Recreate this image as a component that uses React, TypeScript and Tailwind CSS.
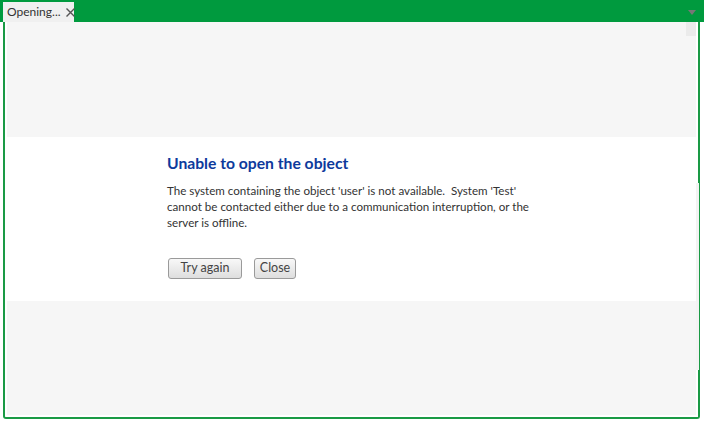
export default function App() {
  return (
    <div className="relative w-[704px] h-[423px] bg-white overflow-hidden" style={{ fontFamily: 'Lato, "Open Sans", sans-serif' }}>
      {/* top tab strip */}
      <div className="h-[22px] bg-[#009a3e] flex items-end pl-[3px] relative">
        <div className="h-[20px] w-[71px] bg-[#f0f0f0] flex items-center pl-[4px] gap-[5px] text-[12px] text-[#333]">
          <span className="whitespace-nowrap">Opening...</span>
          <svg width="9" height="9" viewBox="0 0 9 9" className="shrink-0 mt-[1px]">
            <path d="M0.5 0.5 L8.5 8.5 M8.5 0.5 L0.5 8.5" stroke="#555" strokeWidth="1.4" />
          </svg>
        </div>
        <svg width="8" height="5" viewBox="0 0 8 5" className="absolute right-[8px] top-[10px]">
          <path d="M0 0 H8 L4 5 Z" fill="#777" />
        </svg>
      </div>

      {/* frame */}
      <div className="ml-[3px] w-[697px] h-[397px] border-x-2 border-b-2 border-[#1a9a45] rounded-b-[3px] pl-[2px] pr-[2px] pb-[2px] flex">
        <div className="flex-1 flex flex-col relative">
          <div className="h-[115px] bg-[#f6f6f6] relative">
            <div className="absolute right-0 top-0 w-[10px] h-[14px] bg-[#ebebeb]" />
          </div>
          <div className="h-[164px] bg-white pl-[160px] pt-[16px]">
            <h1 className="text-[15.7px] font-bold text-[#0d3a9c] leading-[20px]">Unable to open the object</h1>
            <p className="mt-[10px] text-[11.6px] leading-[16px] text-[#333] whitespace-nowrap">
              The system containing the object 'user' is not available.&nbsp; System 'Test'
              <br />
              cannot be contacted either due to a communication interruption, or the
              <br />
              server is offline.
            </p>
            <div className="mt-[27px] flex gap-[12px] ml-[1px]">
              <button className="h-[21px] w-[74px] rounded-[3px] border border-[#9a9a9a] bg-gradient-to-b from-[#f8f8f8] to-[#dedede] text-[12.5px] text-[#444] leading-none">
                Try again
              </button>
              <button className="h-[21px] w-[42px] rounded-[3px] border border-[#9a9a9a] bg-gradient-to-b from-[#f8f8f8] to-[#dedede] text-[12.5px] text-[#444] leading-none">
                Close
              </button>
            </div>
          </div>
          <div className="flex-1 bg-[#f6f6f6]" />
          <div className="absolute right-[-3px] top-[161px] w-[3px] h-[187px] bg-[#f3f3f3]" />
        </div>
      </div>
    </div>
  );
}
